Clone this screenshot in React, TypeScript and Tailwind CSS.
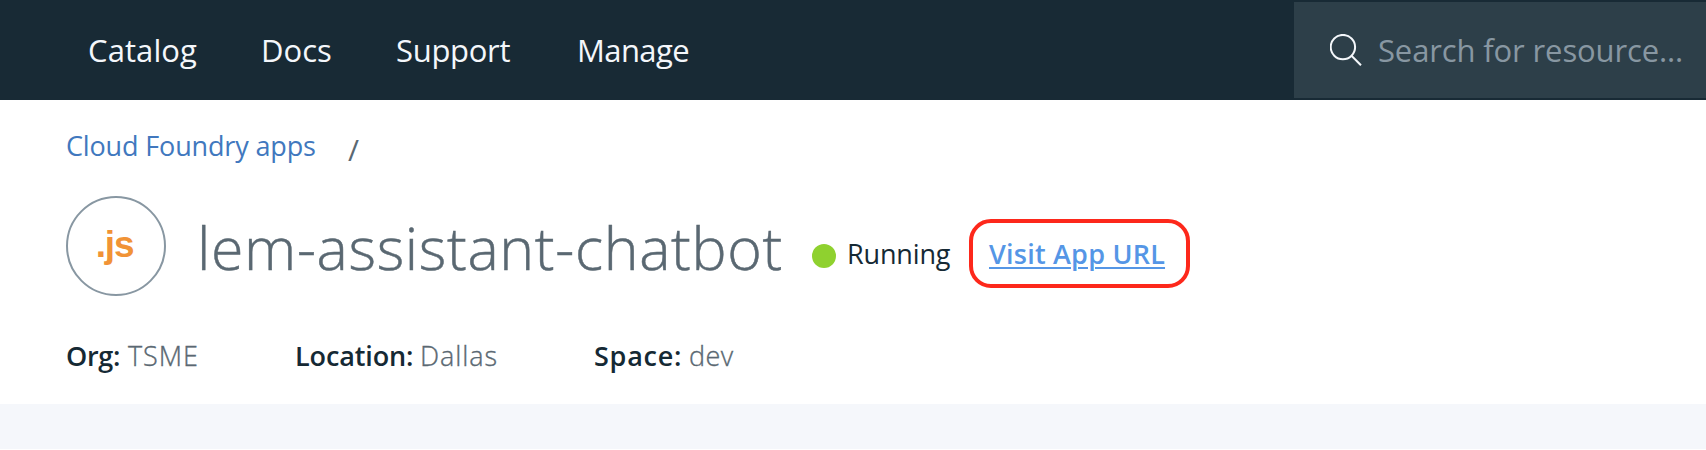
import type { ReactNode } from "react";

function NavLink({ className, children }: { className: string; children: ReactNode }) {
  return (
    <a href="#" className={`shrink-0 whitespace-nowrap ${className}`}>
      {children}
    </a>
  );
}

function Fact({ label, value, className, labelClass, valueClass }: {
  label: string;
  value: string;
  className: string;
  labelClass: string;
  valueClass: string;
}) {
  return (
    <div className={`flex shrink-0 whitespace-nowrap ${className}`}>
      <dt className={`shrink-0 font-semibold text-[#152934] ${labelClass}`}>{label}</dt>
      <dd className={`font-light text-[#5a6872] [-webkit-text-stroke:0.35px_#5a6872] ${valueClass}`}>{value}</dd>
    </div>
  );
}

export default function App() {
  return (
    <div className="h-[450px] w-[1706px] overflow-hidden bg-white font-['Open_Sans',sans-serif]">
      <header className="flex h-[100px] items-center bg-[#182a35] text-[31px] leading-10 text-[#f4f7fb]">
        <nav className="flex grow pl-[88px]">
          <NavLink className="w-[173px] tracking-[0.1px]">Catalog</NavLink>
          <NavLink className="w-[135px]">Docs</NavLink>
          <NavLink className="w-[181px] tracking-[-0.3px]">Support</NavLink>
          <NavLink className="tracking-[-0.6px]">Manage</NavLink>
        </nav>
        <div className="flex h-24 w-[412px] items-center bg-[#2d3f49] pl-9">
          <svg viewBox="0 0 32 32" className="h-8 w-8 shrink-0" fill="none" stroke="#f4f7fb" strokeWidth="2">
            <circle cx="12.9" cy="13.1" r="12.2" />
            <path d="M21.5 21.8 31 31.3" />
          </svg>
          <span className="ml-4 whitespace-nowrap tracking-[-0.13px] text-[#8897a2]">Search for resource...</span>
        </div>
      </header>

      <main className="h-[304px] px-[66px] text-[27px] leading-10">
        <div className="flex h-24 pt-[26px]">
          <a href="#" className="w-[282px] tracking-[-0.15px] text-[#4178be]">Cloud Foundry apps</a>
          <span className="pt-1 text-[30px] text-[#5a6872]">/</span>
        </div>

        <div className="flex h-[100px] items-center">
          <div className="flex h-[100px] w-[100px] shrink-0 items-center justify-center rounded-full border-2 border-[#8897a2] pb-[2px] pr-[3px] font-['Liberation_Sans',sans-serif] text-[37px] font-bold tracking-[-1.2px] text-[#f19336]">
            .js
          </div>
          <h1 className="ml-[31px] w-[615px] shrink-0 pt-[2px] text-[59px] font-light leading-[80px] tracking-[0.68px] text-[#5a6872] [-webkit-text-stroke:0.5px_#5a6872]">
            lem-assistant-chatbot
          </h1>
          <span className="mt-5 h-6 w-6 shrink-0 rounded-full bg-[#8fd12f]" />
          <span className="ml-[11px] mt-[15px] w-[122px] shrink-0 tracking-[-0.15px] text-[#152934]">Running</span>
          <div className="mt-[15px] flex h-[69px] w-[221px] shrink-0 items-center rounded-[22px] border-4 border-[#fd281b] pl-4">
            <a href="#" className="whitespace-nowrap font-semibold tracking-[0.22px] text-[#5596e6] underline decoration-2 underline-offset-[3px]">
              Visit App URL
            </a>
          </div>
        </div>

        <dl className="flex pt-10">
          <Fact label="Org:" value="TSME" className="w-[229px]" labelClass="w-[62px] tracking-[-0.3px]" valueClass="tracking-[0.9px]" />
          <Fact label="Location:" value="Dallas" className="w-[299px]" labelClass="w-[125px] tracking-[-0.13px]" valueClass="tracking-[0.9px]" />
          <Fact label="Space:" value="dev" className="" labelClass="w-[95px] tracking-[0.74px]" valueClass="tracking-[0.4px]" />
        </dl>
      </main>

      <section className="h-[45px] bg-[#f5f7fb]" />
    </div>
  );
}
